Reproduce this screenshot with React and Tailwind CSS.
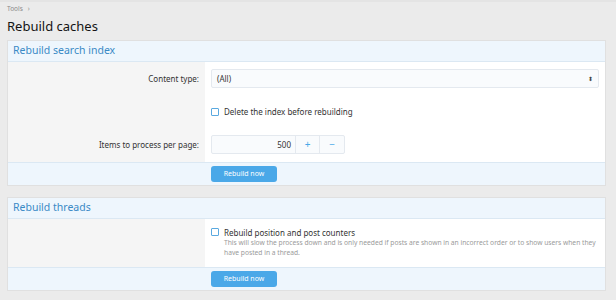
import React from 'react';

const font = { fontFamily: '"Noto Sans", "Open Sans", sans-serif' };

const Checkbox = () => (
  <span className="inline-block w-[8px] h-[8px] border border-[#5aa9e0] rounded-[1px] bg-white shrink-0" />
);

const RebuildButton = () => (
  <button className="h-[16px] w-[66px] rounded-[3px] bg-[#4aa8e8] text-white text-[7px] leading-[16px] text-center">
    Rebuild now
  </button>
);

const BlockHeader = ({ title }) => (
  <div className="h-[21px] bg-[#eef6fd] border-b border-[#dbe8f3] px-[5px] flex items-center">
    <h2 className="text-[10.5px] text-[#3a8ac6]">{title}</h2>
  </div>
);

const BlockFooter = () => (
  <div className="h-[23px] bg-[#eef6fd] border-t border-[#dbe8f3] flex items-center pl-[203px]">
    <RebuildButton />
  </div>
);

const Row = ({ label, height, children }) => (
  <div className={`grid grid-cols-[197px_1fr] ${height}`}>
    <div className="bg-[#f5f5f5] flex items-center justify-end pr-[6px] text-[8px] text-[#333]">{label}</div>
    <div className="flex items-center px-[6px]">{children}</div>
  </div>
);

export default function App() {
  return (
    <div className="w-[616px] h-[300px] bg-[#ebebeb] overflow-hidden text-[#141414]" style={font}>
      <div className="h-[2px] bg-[#e4e4e4]" />
      <div className="px-[7px] pt-[2px] text-[6.5px] text-[#8a8a8a] flex items-center gap-[5px]">
        <span>Tools</span>
        <span>›</span>
      </div>
      <h1 className="px-[7px] mt-[2px] text-[13px] leading-[20px] text-[#141414]">Rebuild caches</h1>

      <div className="ml-[7px] w-[599px] mt-[4px] border border-[#e0e0e0] bg-white">
        <BlockHeader title="Rebuild search index" />
        <Row label="Content type:" height="h-[34px]">
          <div className="w-full h-[19px] border border-[#e4e9ef] rounded-[2px] bg-[#f9fbfd] flex items-center justify-between px-[5px] text-[8px] text-[#333]">
            <span>(All)</span>
            <span className="text-[6px] leading-none text-[#444]">⬍</span>
          </div>
        </Row>
        <Row label="" height="h-[32px]">
          <label className="flex items-center gap-[5px] text-[8px] text-[#333]">
            <Checkbox />
            <span>Delete the index before rebuilding</span>
          </label>
        </Row>
        <Row label="Items to process per page:" height="h-[34px]">
          <div className="flex h-[19px] border border-[#e4e9ef] rounded-[2px] bg-[#f9fbfd] text-[8px]">
            <div className="w-[83px] flex items-center justify-end pr-[4px] text-[#333]">500</div>
            <div className="w-[24px] border-l border-[#e4e9ef] flex items-center justify-center text-[#4aa8e8] text-[10px]">+</div>
            <div className="w-[25px] border-l border-[#e4e9ef] flex items-center justify-center text-[#4aa8e8] text-[10px]">−</div>
          </div>
        </Row>
        <BlockFooter />
      </div>

      <div className="ml-[7px] w-[599px] mt-[11px] border border-[#e0e0e0] bg-white">
        <BlockHeader title="Rebuild threads" />
        <div className="grid grid-cols-[197px_1fr] h-[48px]">
          <div className="bg-[#f5f5f5]" />
          <div className="px-[6px] pt-[8px]">
            <label className="flex items-center gap-[5px] text-[8px] text-[#333] leading-[11px]">
              <Checkbox />
              <span>Rebuild position and post counters</span>
            </label>
            <p className="pl-[13px] pr-[2px] text-[6.7px] leading-[10px] text-[#9a9a9a]">
              This will slow the process down and is only needed if posts are shown in an incorrect order or to show users when they have posted in a thread.
            </p>
          </div>
        </div>
        <BlockFooter />
      </div>
    </div>
  );
}
